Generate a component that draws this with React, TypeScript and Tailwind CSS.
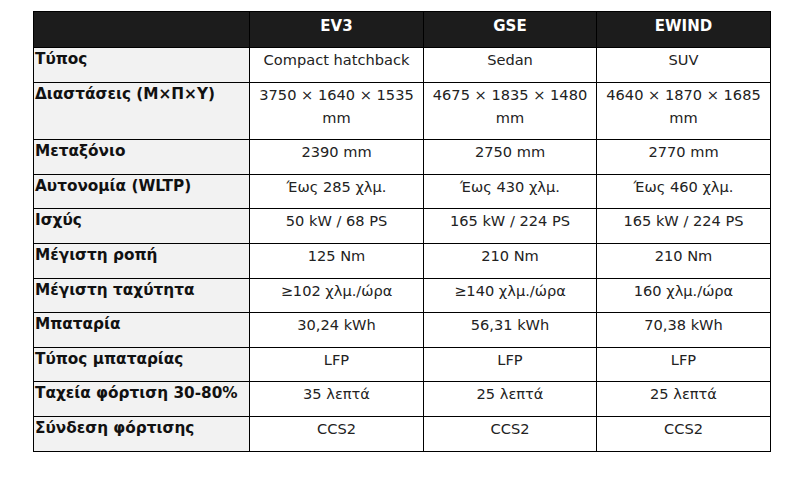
const rows: [string, string, string, string][] = [
  ['Τύπος', 'Compact hatchback', 'Sedan', 'SUV'],
  ['Διαστάσεις (Μ×Π×Υ)', '3750 × 1640 × 1535 mm', '4675 × 1835 × 1480 mm', '4640 × 1870 × 1685 mm'],
  ['Μεταξόνιο', '2390 mm', '2750 mm', '2770 mm'],
  ['Αυτονομία (WLTP)', 'Έως 285 χλμ.', 'Έως 430 χλμ.', 'Έως 460 χλμ.'],
  ['Ισχύς', '50 kW / 68 PS', '165 kW / 224 PS', '165 kW / 224 PS'],
  ['Μέγιστη ροπή', '125 Nm', '210 Nm', '210 Nm'],
  ['Μέγιστη ταχύτητα', '≥102 χλμ./ώρα', '≥140 χλμ./ώρα', '160 χλμ./ώρα'],
  ['Μπαταρία', '30,24 kWh', '56,31 kWh', '70,38 kWh'],
  ['Τύπος μπαταρίας', 'LFP', 'LFP', 'LFP'],
  ['Ταχεία φόρτιση 30-80%', '35 λεπτά', '25 λεπτά', '25 λεπτά'],
  ['Σύνδεση φόρτισης', 'CCS2', 'CCS2', 'CCS2'],
];

export default function App() {
  return (
    <div className="w-[796px] h-[482px] bg-white pt-[11px] pl-[33px] font-['DejaVu_Sans',sans-serif] text-[#222]">
      <table className="w-[737px] border-collapse table-fixed">
        <colgroup>
          <col className="w-[216px]" />
          <col className="w-[174px]" />
          <col className="w-[173px]" />
          <col className="w-[174px]" />
        </colgroup>
        <thead>
          <tr className="bg-[#1c1c1c] text-white">
            <th className="border border-black h-[36px]" />
            {['EV3', 'GSE', 'EWIND'].map((m) => (
              <th key={m} className="border border-black align-top pt-[3px] pb-[8px] text-[15px] leading-[23px] font-bold text-center">
                {m}
              </th>
            ))}
          </tr>
        </thead>
        <tbody>
          {rows.map(([label, ...vals]) => (
            <tr key={label}>
              <td className="border border-black bg-[#f2f2f2] align-top pl-[1px] pt-0 pb-[10.6px] text-[15.3px] leading-[23px] font-bold text-[#111] whitespace-nowrap">
                {label}
              </td>
              {vals.map((v, i) => (
                <td key={i} className="border border-black align-top px-[3px] pt-0 pb-[10.6px] text-[14.6px] leading-[23px] text-center">
                  {v}
                </td>
              ))}
            </tr>
          ))}
        </tbody>
      </table>
    </div>
  );
}
